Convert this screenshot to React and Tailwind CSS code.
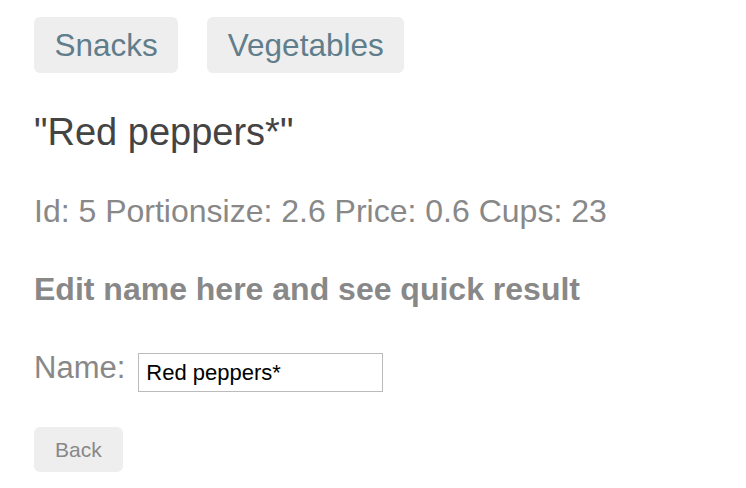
import React, { useState } from 'react';

const FONT = { fontFamily: '"Liberation Sans", Arial, sans-serif' };

export default function App() {
  const [name, setName] = useState('Red peppers*');

  return (
    <div className="min-h-screen bg-white pl-[34px] pt-[17px]" style={FONT}>
      <div className="flex gap-[29px]">
        <button className="h-[56px] pt-[2px] px-[20.5px] rounded-[6px] bg-[#eeeeee] text-[31.5px] leading-none text-[#607d8b]" style={FONT}>
          Snacks
        </button>
        <button className="h-[56px] pt-[2px] px-[20.5px] rounded-[6px] bg-[#eeeeee] text-[31.5px] leading-none text-[#607d8b]" style={FONT}>
          Vegetables
        </button>
      </div>

      <h2 className="mt-[38px] text-[38px] leading-[42px] font-normal text-[#444444]">
        "{name}"
      </h2>

      <p className="mt-[40px] text-[32px] leading-[36px] text-[#888888]">
        Id: 5 Portionsize: 2.6 Price: 0.6 Cups: 23
      </p>

      <h3 className="mt-[42px] text-[32px] leading-[36px] font-bold text-[#888888]">
        Edit name here and see quick result
      </h3>

      <div className="mt-[43px] flex items-start">
        <label className="text-[31px] leading-[36px] text-[#888888] mr-[13px]">Name:</label>
        <input
          value={name}
          onChange={e => setName(e.target.value)}
          className="mt-[3px] w-[245px] h-[39px] border border-[#bbbbbb] px-[7px] text-[22px] text-black outline-none"
          style={FONT}
        />
      </div>

      <button className="mt-[35px] h-[45px] px-[21px] rounded-[6px] bg-[#eeeeee] text-[21px] leading-none text-[#888888]" style={FONT}>
        Back
      </button>
    </div>
  );
}
